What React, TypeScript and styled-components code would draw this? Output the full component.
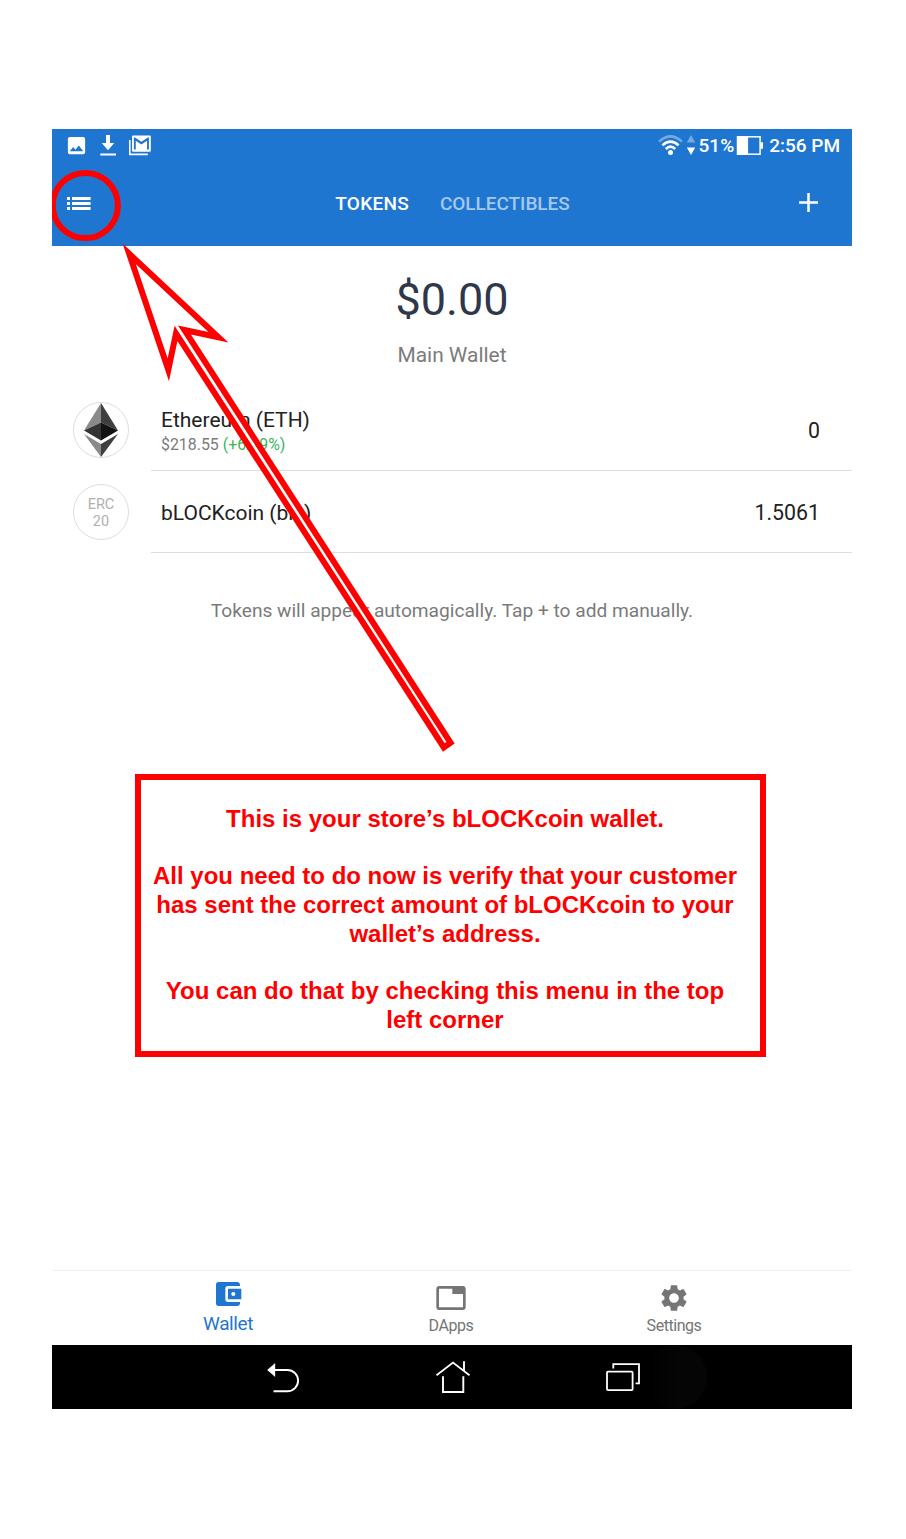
import React from "react";
import styled, { createGlobalStyle } from "styled-components";
import { MdAccountBalanceWallet, MdTab, MdSettings, MdImage } from "react-icons/md";

const GlobalStyle = createGlobalStyle`
  * { box-sizing: border-box; }
  body { margin: 0; background: #fff; font-family: Roboto, sans-serif; }
`;

const Page = styled.main`
  width: 906px;
  height: 1539px;
  padding: 129px 0 0 52px;
  background: #fff;
`;

const Device = styled.div`
  position: relative;
  width: 800px;
  height: 1280px;
  display: flex;
  flex-direction: column;
  overflow: hidden;
  background: #fff;
`;

const Header = styled.header`
  height: 117px;
  flex: none;
  background: #1f76d0;
  color: #fff;
`;

const StatusBar = styled.div`
  height: 33px;
  display: flex;
  align-items: center;
  justify-content: space-between;
  padding: 0 12px 0 13px;
`;

const StatusGroup = styled.div<{ $gap: number }>`
  display: flex;
  align-items: center;
  gap: ${(p) => p.$gap}px;
`;

const StatusText = styled.span`
  font-size: 19px;
  line-height: 33px;
  font-weight: 500;
  white-space: nowrap;
`;

const AppBar = styled.nav`
  height: 84px;
  display: flex;
  align-items: center;
  justify-content: space-between;
  padding: 0 34px 1px 15px;
`;

const BarTabs = styled.div`
  display: flex;
  gap: 31px;
  margin-left: 15px;
`;

const BarTab = styled.span<{ $active?: boolean }>`
  font-size: 19px;
  line-height: 24px;
  font-weight: 500;
  letter-spacing: ${(p) => (p.$active ? 0.25 : -0.05)}px;
  color: ${(p) => (p.$active ? "#fff" : "#a5c8ec")};
`;

const Balance = styled.section`
  height: 143px;
  flex: none;
  padding-top: 27px;
  text-align: center;
`;

const Amount = styled.div`
  font-size: 45px;
  line-height: 54px;
  color: #2f384b;
`;

const WalletName = styled.div`
  margin-top: 16px;
  font-size: 20.9px;
  line-height: 24px;
  color: #7b7b7b;
`;

const TokenRow = styled.div`
  height: 82px;
  flex: none;
  display: flex;
  align-items: center;
  padding-left: 21px;
`;

const TokenIcon = styled.div`
  width: 56px;
  height: 56px;
  flex: none;
  border: 1px solid #dcdcdc;
  border-radius: 50%;
  display: flex;
  align-items: center;
  justify-content: center;
  text-align: center;
  font-size: 14.5px;
  line-height: 17px;
  color: #b0b0b0;
`;

const TokenBadge = styled.span`
  padding-top: 1px;
`;

const TokenBody = styled.div`
  flex: 1;
  height: 82px;
  margin-left: 22px;
  padding: 2px 32px 0 10px;
  border-bottom: 1px solid #dedede;
  display: flex;
  align-items: center;
  justify-content: space-between;
`;

const TokenInfo = styled.div<{ $priced: boolean }>`
  padding-top: ${(p) => (p.$priced ? 2 : 0)}px;
`;

const TokenName = styled.div`
  font-size: 21px;
  line-height: 26px;
  color: #212121;
`;

const TokenPrice = styled.div`
  font-size: 15.9px;
  line-height: 23px;
  color: #7b7b7b;
`;

const TokenAmount = styled(TokenName)`
  font-size: 21.3px;
`;

const Change = styled.span`
  color: #3ab65a;
`;

const Hint = styled.p`
  margin: 46px 0 0;
  font-size: 19.15px;
  line-height: 24px;
  text-align: center;
  color: #7b7b7b;
`;

const TabBar = styled.nav`
  height: 75px;
  margin-top: auto;
  flex: none;
  display: flex;
  justify-content: center;
  padding-right: 2px;
  border-top: 1px solid #f1f1f1;
`;

const TabItem = styled.div<{ $active?: boolean }>`
  width: 223px;
  padding-top: ${(p) => (p.$active ? 7 : 11)}px;
  display: flex;
  flex-direction: column;
  align-items: center;
  color: ${(p) => (p.$active ? "#1f76d0" : "#757575")};
`;

const TabLabel = styled.span<{ $active?: boolean }>`
  margin-top: ${(p) => (p.$active ? 2 : 0)}px;
  font-size: ${(p) => (p.$active ? 19 : 16)}px;
  line-height: 24px;
  letter-spacing: ${(p) => (p.$active ? -0.4 : -0.45)}px;
`;

const SystemNav = styled.nav`
  position: relative;
  height: 64px;
  flex: none;
  display: flex;
  justify-content: center;
  align-items: center;
  gap: 136px;
  padding-left: 2px;
  background: #000;

  /* fading touch ripple beside the recents button */
  &::before {
    content: "";
    position: absolute;
    left: 591px;
    top: 0;
    width: 64px;
    height: 64px;
    border-radius: 50%;
    background: linear-gradient(90deg, #000 10%, #050505 60%);
  }

  svg {
    position: relative;
  }
`;

const Callout = styled.aside`
  position: absolute;
  left: 83px;
  top: 645px;
  width: 631px;
  height: 283px;
  border: 6px solid #f00;
  padding: 25px 11px 0 0;
  background: #fff;
  text-align: center;
  font-family: "Liberation Sans", Arial, sans-serif;
  font-weight: 700;
  font-size: 24px;
  line-height: 28.8px;
  color: #f00;
`;

const CalloutText = styled.p`
  margin: 0 0 28.6px;
  white-space: nowrap;
`;

const Markup = styled.svg`
  position: absolute;
  left: 0;
  top: 0;
`;

const DownloadIcon = () => (
  <svg width="16" height="21" viewBox="0 0 16 21" fill="#fff">
    <path d="M6 0h4v8h4.3L8 15.2 1.7 8H6zM.3 18.6H16v1.9H.3z" />
  </svg>
);

const MailIcon = () => (
  <svg width="23" height="21" viewBox="0 0 23 21">
    <path d="M1.8 5V19.4H19.8" fill="none" stroke="#fff" strokeWidth="1.6" />
    <rect x="4" y=".5" width="18.8" height="16.2" rx="1" fill="#fff" />
    <path
      d="M20 18H18V9.25L12 13L6 9.25V18H4V6H5.2L12 10.25L18.8 6H20z"
      transform="translate(2.12 -3.5)scale(.94 1)"
      fill="#1f76d0"
    />
  </svg>
);

const WifiIcon = () => (
  <svg width="27" height="22" viewBox="0 0 27 22" fill="none" strokeWidth="2.6">
    <path d="M1 6.6Q12.5 -3.8 24 6.6" stroke="#73abe2" />
    <path d="M4.4 10.4Q12.5 2.8 20.6 10.4" stroke="#fff" />
    <path d="M7.8 14Q12.5 9.4 17.2 14" stroke="#fff" />
    <circle cx="12.5" cy="17.6" r="2.5" fill="#fff" />
  </svg>
);

const TrafficIcon = () => (
  <svg width="10" height="21" viewBox="0 0 10 21">
    <path d="M4 0L8.2 7.6H-.2z" fill="#73abe2" />
    <path d="M4 20L-.2 12.4H8.2z" fill="#fff" />
  </svg>
);

const BatteryIcon = () => (
  <svg width="31" height="20" viewBox="0 0 31 20">
    <rect x="1.5" y=".8" width="22.6" height="17.4" fill="none" stroke="#fff" strokeWidth="1.5" />
    <path d="M1.5 .8H12.1V18.2H1.5zM24.5 6.3H27V12.8H24.5z" fill="#fff" />
  </svg>
);

const MenuIcon = () => (
  <svg width="24" height="13" viewBox="0 0 24 13" fill="#fff">
    <path d="M0 0h3v3H0zM0 5h3v3H0zM0 10h3v3H0zM5 0h18.6v3H5zM5 5h18.6v3H5zM5 10h18.6v3H5z" />
  </svg>
);

const PlusIcon = () => (
  <svg width="19" height="21" viewBox="0 0 19 21">
    <path d="M0 9.5H19M9.5 0V19" stroke="#fff" strokeWidth="2.5" />
  </svg>
);

const EthereumIcon = () => (
  <svg width="54" height="54" viewBox="0 0 54 54">
    <path d="M27 0L10 27.5L27 19.5z" fill="#8a8a8a" />
    <path d="M27 0L44 27.5L27 19.5z" fill="#3f3f3f" />
    <path d="M10 27.5L27 19.5V37.5z" fill="#343434" />
    <path d="M44 27.5L27 19.5V37.5z" fill="#131313" />
    <path d="M10 31L27 41V54z" fill="#8a8a8a" />
    <path d="M44 31L27 41V54z" fill="#3f3f3f" />
  </svg>
);

const BackIcon = () => (
  <svg width="34" height="32" viewBox="0 0 34 32">
    <path d="M7.5 9H21.5A10.6 10.6 0 0 1 21.5 30.2H7.5" fill="none" stroke="#fff" strokeWidth="1.9" />
    <path d="M1.2 9L9.2 2V16z" fill="#fff" />
  </svg>
);

const HomeIcon = () => (
  <svg width="34" height="32" viewBox="0 0 34 32" fill="none" stroke="#fff" strokeWidth="1.9">
    <path d="M.5 14.3L17 1.6L33.5 14.3M28 .3V10M7 15.3V31H27.3V15.3" />
  </svg>
);

const RecentsIcon = () => (
  <svg width="34" height="28" viewBox="0 0 34 28" fill="none" stroke="#fff" strokeWidth="1.8">
    <rect x="1" y="8.7" width="25.6" height="18.4" rx="1" />
    <path d="M7.3 5.4V1.2H33V20.4H29.6" />
  </svg>
);

type Token = { icon: React.ReactNode; name: string; price?: string; change?: string; amount: string };

const tokens: Token[] = [
  { icon: <EthereumIcon />, name: "Ethereum (ETH)", price: "$218.55", change: "(+6.09%)", amount: "0" },
  { icon: <TokenBadge>ERC<br />20</TokenBadge>, name: "bLOCKcoin (blk)", amount: "1.5061" },
];

export default function App() {
  return (
    <>
      <GlobalStyle />
      <Page>
        <Device>
          <Header>
            <StatusBar>
              <StatusGroup $gap={12}>
                <MdImage size={23} />
                <DownloadIcon />
                <MailIcon />
              </StatusGroup>
              <StatusGroup $gap={2}>
                <WifiIcon />
                <TrafficIcon />
                <StatusText>51%</StatusText>
                <BatteryIcon />
                <StatusText>2:56 PM</StatusText>
              </StatusGroup>
            </StatusBar>
            <AppBar>
              <MenuIcon />
              <BarTabs>
                <BarTab $active>TOKENS</BarTab>
                <BarTab>COLLECTIBLES</BarTab>
              </BarTabs>
              <PlusIcon />
            </AppBar>
          </Header>
          <Balance>
            <Amount>$0.00</Amount>
            <WalletName>Main Wallet</WalletName>
          </Balance>
          {tokens.map((t) => (
            <TokenRow key={t.name}>
              <TokenIcon>{t.icon}</TokenIcon>
              <TokenBody>
                <TokenInfo $priced={Boolean(t.price)}>
                  <TokenName>{t.name}</TokenName>
                  {t.price && <TokenPrice>{t.price} <Change>{t.change}</Change></TokenPrice>}
                </TokenInfo>
                <TokenAmount>{t.amount}</TokenAmount>
              </TokenBody>
            </TokenRow>
          ))}
          <Hint>Tokens will appear automagically. Tap + to add manually.</Hint>
          <TabBar>
            <TabItem $active>
              <MdAccountBalanceWallet size={32} />
              <TabLabel $active>Wallet</TabLabel>
            </TabItem>
            <TabItem>
              <MdTab size={32} />
              <TabLabel>DApps</TabLabel>
            </TabItem>
            <TabItem>
              <MdSettings size={32} />
              <TabLabel>Settings</TabLabel>
            </TabItem>
          </TabBar>
          <SystemNav>
            <BackIcon />
            <HomeIcon />
            <RecentsIcon />
          </SystemNav>
          <Markup width="800" height="1280" viewBox="52 129 800 1280" fill="none" stroke="#f00" strokeWidth="6">
            <circle cx="85.3" cy="205.5" r="32.6" />
            <path
              d="M129.2 253.8L218.5 337.3L184.4 330L450.55 742.8L443.8 747.5L176 333.4L168.3 369.8z"
              fill="#fff"
              strokeMiterlimit="20"
            />
          </Markup>
          <Callout>
            <CalloutText>This is your store’s bLOCKcoin wallet.</CalloutText>
            <CalloutText>
              All you need to do now is verify that your customer<br />
              has sent the correct amount of bLOCKcoin to your<br />
              wallet’s address.
            </CalloutText>
            <CalloutText>
              You can do that by checking this menu in the top<br />
              left corner
            </CalloutText>
          </Callout>
        </Device>
      </Page>
    </>
  );
}
